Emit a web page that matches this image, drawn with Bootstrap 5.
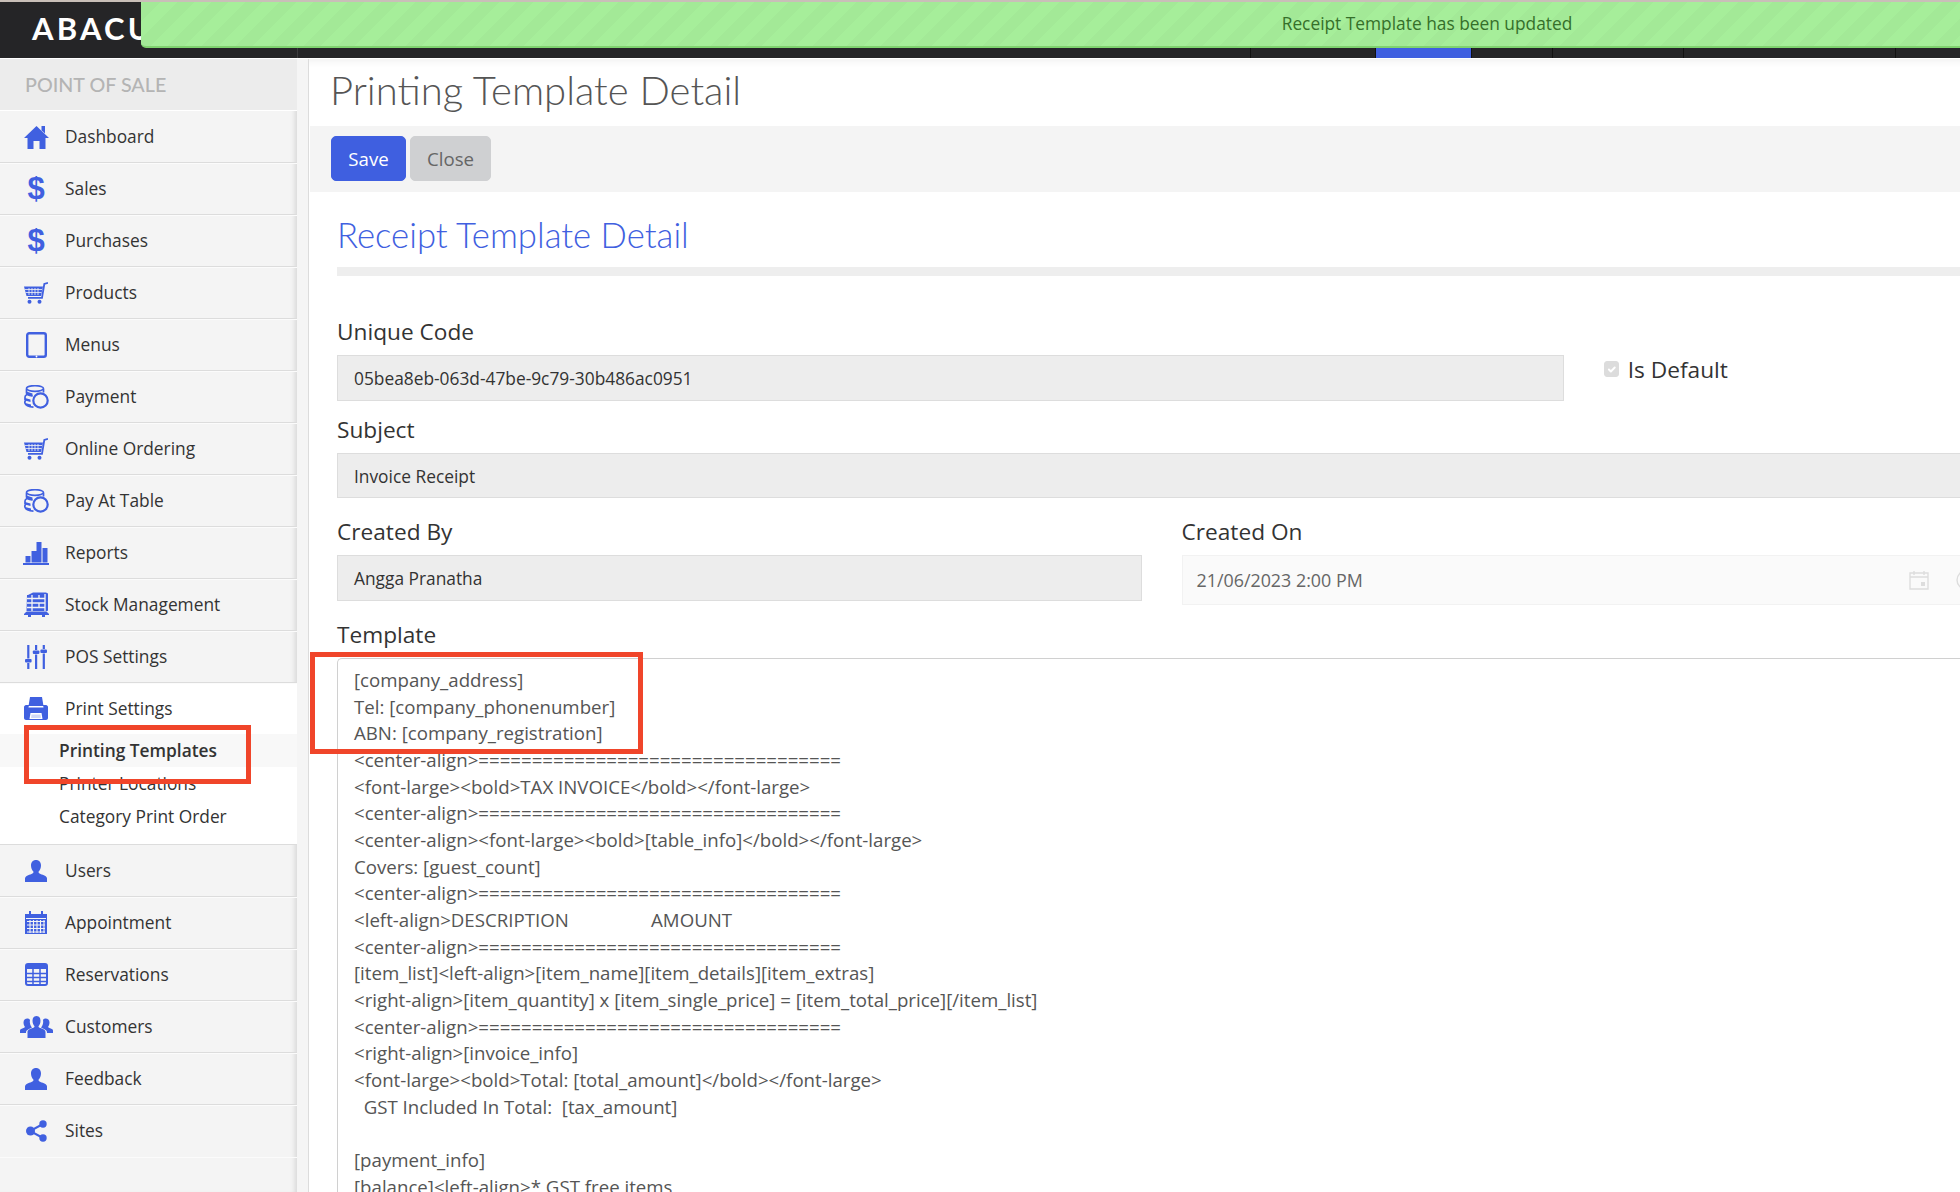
<!DOCTYPE html>
<html lang="en">
<head>
<meta charset="utf-8">
<title>Printing Template Detail</title>
<link rel="stylesheet" href="https://cdn.jsdelivr.net/npm/bootstrap@5.3.0/dist/css/bootstrap.min.css">
<style>
html,body{height:100%;overflow:hidden}
body{font-family:"Open Sans","Noto Sans",sans-serif;color:#333;background:#fff;position:relative}
a{text-decoration:none}
.top-bar{height:59px;background:#252527;border-top:2px solid #c9bfb8;border-bottom:1px solid #fff}
.logo-text{width:298px;padding-left:32px;font-family:Lato,sans-serif;font-size:31px;font-weight:700;letter-spacing:3.2px;color:#fff;line-height:52px;border-right:1px solid #3c3c3e;white-space:nowrap;overflow:hidden}
.tab-a{width:953px;border-right:1px solid #111}
.tab-b{width:125px;border-right:1px solid #111}
.tab-c{width:95px;background:#3f5fe0}
.tab-d{width:82px;border-left:1px solid #111;border-right:1px solid #111}
.tab-e{width:131px;border-right:1px solid #111}
.tab-f{width:212px;border-right:1px solid #111}
.notice{position:absolute;left:141px;top:2px;width:2572px;height:46px;border-bottom:2px solid #7fd26f;border-bottom-left-radius:5px;background-color:#a6ee9a;background-image:repeating-linear-gradient(-45deg,#a6ee9a 0,#a6ee9a 12px,#a3e997 12px,#a3e997 24px);color:#35702a;font-size:17.33px;text-align:center;line-height:43px}
.page-wrap{height:1133px;overflow:hidden}
.side{width:297px;flex:none;background:#f4f4f4;box-shadow:inset -5px 0 5px -3px rgba(0,0,0,.12)}
.side-head{height:52px;background:#ececec;padding-left:25px;line-height:52px;font-family:Lato,sans-serif;font-size:19.7px;font-weight:500;color:#b4b4b4;border-bottom:1px solid #fff}
.menu-row{height:52px;display:flex;align-items:center;padding:0 0 0 16px;background:transparent;border:0;border-bottom:1px solid #dcdcdc;box-shadow:0 1px 0 #fbfbfb;font-size:17.33px;color:#333;border-radius:0}
.menu-icon{width:40px;height:28px;margin-right:9px;display:flex;align-items:center;justify-content:center;color:#4060e0;flex:none}
.dollar{font-family:"Liberation Sans",sans-serif;font-weight:700;font-size:31px;line-height:28px}
.menu-open{background:#fff;height:162px;border-bottom:1px solid #dcdcdc}
.menu-open .menu-row{border:0;box-shadow:none;height:51px}
.sub-row{display:block;height:33px;line-height:33px;padding-left:59px;font-size:17.33px;color:#333}
.sub-on{background:#f8f8f8;font-weight:600}
.rail{width:12px;flex:none;background:#f5f5f5;border-right:1px solid #dcdcdc}
.main{width:1700px;flex:none;background:#fff}
.title-band{height:67px;padding-left:21px;font-family:Lato,sans-serif;font-size:40px;color:#555;line-height:62px;font-weight:300;box-shadow:inset 0 10px 10px -10px rgba(0,0,0,.1)}
.tool-band{height:66px;background:#f4f4f4;padding:10px 21px;margin-left:1px;gap:4px}
.act-btn{height:45px;font-size:18.67px;border-radius:5px;padding:0;line-height:42px}
.act-save{background:#3f5fe0;border-color:#3f5fe0;color:#fff;width:75px}
.act-close{background:#cfd0d2;border-color:#cfd0d2;color:#666;width:81px}
.sheet{padding:0 0 0 8px}
.sheet-head{height:75px;margin:0 0 0 20px;padding-top:23px;font-family:Lato,sans-serif;font-size:34.7px;line-height:40px;color:#4060e0;font-weight:300}
.sheet-rule{height:9px;background:#eee;margin-left:20px;margin-bottom:42px}
.wide-row{--bs-gutter-x:40px;width:1689px;margin:0}
.fld-label{display:block;height:27px;line-height:27px;font-size:22.67px;color:#333;margin-bottom:10px}
.fld-box{height:46px;line-height:44px;padding:0 16px;font-size:17.33px;color:#333;background:#ededed;border:1px solid #ddd;border-radius:0;margin-bottom:15px}
.fld-sub{height:45px;line-height:44px;margin-bottom:20px;margin-top:1px}
.fld-mid{margin-bottom:20px}
.fld-date{height:50px;line-height:48px;background:#fafafa;border-color:#f2f2f2;color:#666;padding-left:14px;font-size:17.87px;position:relative;margin-bottom:0}
.date-ico{position:absolute;left:726px;top:14px;color:#ddd}
.clock-ico{position:absolute;left:773px;top:14px;color:#ddd}
.check-wrap{margin:0;padding:6px 0 0 0;display:flex;align-items:flex-start;height:46px;margin-top:37px}
.check-box.form-check-input{float:none;margin:0 9px 0 0;width:15px;height:16px;background-color:#dcdcdc;border-color:#dcdcdc;opacity:1;border-radius:3px;flex:none}
.check-text{font-size:22.67px;line-height:18px;color:#333;opacity:1}
.tpl-label{margin-bottom:10px}
.tpl-box{height:600px;border:1px solid #d0d0d0;border-right:0;border-radius:5px 0 0 0;padding:8px 16px;font-size:18.67px;line-height:26.67px;color:#555;white-space:pre;overflow:hidden;width:1650px}
.mark-box{position:absolute;border:5px solid #f0452a;pointer-events:none}
.mark-side{left:24px;top:725px;width:227px;height:59px}
.mark-tpl{left:310px;top:652px;width:333px;height:102px}
</style>
</head>
<body>
<svg class="d-none" xmlns="http://www.w3.org/2000/svg">
  <symbol id="i-home" viewBox="0 0 25 24"><path fill="currentColor" d="M12.5 1 25 13h-3.5v11h-6v-8h-6v8h-6V13H0zM17.5 1h3.5v7.500l-3.500-3.300z"/></symbol>
  <symbol id="i-cart" viewBox="0 0 24 22"><path fill="currentColor" d="M0 4.500h19L17 14H2.500z"/><path fill="none" stroke="#f4f4f4" stroke-width=".8" d="M5 6v7M8 6v7M11 6v7M14 6v7M1 7.500h17M1.500 10.500h16"/><path fill="none" stroke="currentColor" stroke-width="1.800" d="M24 .9 20.300 2 18 15.800H4"/><circle cx="5.500" cy="19.800" r="2" fill="currentColor"/><circle cx="15.500" cy="19.800" r="2" fill="currentColor"/></symbol>
  <symbol id="i-tablet" viewBox="0 0 21 26"><rect x="1.200" y="1.200" width="18.600" height="23.600" rx="2" fill="none" stroke="currentColor" stroke-width="2.400"/><circle cx="10.500" cy="24.500" r=".9" fill="#fff"/></symbol>
  <symbol id="i-coins" viewBox="0 0 25 24"><g fill="none" stroke="currentColor" stroke-width="1.700"><ellipse cx="11" cy="3.500" rx="8.500" ry="2.800"/><path d="M2.500 4v4c0 1.500 2.500 2.600 6 2.800M19.500 4v3.500M3 9.500c-1.500.8-2 1.500-2 2.500v3M2 15c-1 .8-1.200 1.500-1.200 2.500 0 2.500 4 4.500 8.700 4.700"/></g><circle cx="16.500" cy="15.500" r="7.200" fill="none" stroke="currentColor" stroke-width="2.200"/><path fill="currentColor" d="M2.500 6.500l6 2v3l-6-2zM1 13l5.500 1.500V17L1 15.500zM1 18l6 1.500V22L1 20z"/></symbol>
  <symbol id="i-bars" viewBox="0 0 26 24"><path fill="currentColor" d="M2.500 15h5v6.500h-5zM8.500 10h5v11.500h-5zM13.500 1h5v20.500h-5zM19.500 7h5v14.500h-5z"/><rect y="22" width="26" height="2" fill="currentColor"/></symbol>
  <symbol id="i-stock" viewBox="0 0 25 25"><path fill="currentColor" d="M4 3 9 .5h13l2 1v17l-1.500 1H2.500L3 3z"/><path fill="none" stroke="#f4f4f4" stroke-width="1.300" d="M3 6.500h18M3 11h18M3 15.500h18M8 3v16M15 3v4M15 11v5M21 2v17"/><path fill="currentColor" d="M0 22 2 20h21l2 2v1H21v2h-3v-2H7v2H4v-2H0z"/></symbol>
  <symbol id="i-sliders" viewBox="0 0 22 24"><path fill="currentColor" d="M2.200 0h2.200v13.500H2.200zM2.200 18h2.200v6H2.200zM10 0h2.200v5H10zM10 9.500h2.200V24H10zM17.700 0h2.200v4H17.700zM17.700 8.500h2.200V24H17.700z"/><rect x="0" y="14" width="6.600" height="3.500" rx="1" fill="currentColor"/><rect x="7.800" y="5.500" width="6.600" height="3.500" rx="1" fill="currentColor"/><rect x="15.400" y="4.500" width="6.600" height="3.500" rx="1" fill="currentColor"/></symbol>
  <symbol id="i-print" viewBox="0 0 24 23"><path fill="currentColor" d="M6 0h12l1.500 9h-15zM0 10c0-1 1-2 2-2h3l-.5 2.500h15L19 8h3c1 0 2 1 2 2v11c0 1-1 2-2 2H2c-1 0-2-1-2-2z"/><path fill="#fff" d="M6.500 16h11l1 6h-13z"/><path fill="currentColor" d="M7.500 17.500h9l.4 3.500H7.100z" opacity=".25"/></symbol>
  <symbol id="i-user" viewBox="0 0 22 22"><path fill="currentColor" d="M11 0c3 0 5 2.200 5 5.500 0 2.500-1 5-2.500 6.300 0 1.200.5 1.700 2 2.200 3 1 6.500 2 6.500 4.500V22H0v-3.500C0 16 3.500 15 6.500 14c1.500-.5 2-1 2-2.200C7 10.500 6 8 6 5.500 6 2.200 8 0 11 0z"/></symbol>
  <symbol id="i-cal" viewBox="0 0 22 23"><path fill="currentColor" d="M0 3h4V0h2v3h10V0h2v3h4v20H0z"/><path fill="none" stroke="#f4f4f4" stroke-width="1" d="M1 7.500h20"/><path fill="none" stroke="#f4f4f4" stroke-width="1.100" d="M2 10.500h18M2 14h18M2 17.500h18M2 21h18M5 9v13M8.500 9v13M12 9v13M15.500 9v13M19 9v13"/></symbol>
  <symbol id="i-table" viewBox="0 0 23 23"><rect x="1" y="1" width="21" height="21" rx="2" fill="none" stroke="currentColor" stroke-width="2"/><path fill="currentColor" d="M1 1h21v5H1z"/><path fill="none" stroke="currentColor" stroke-width="1.500" d="M1 10.500h21M1 14.500h21M1 18.500h21M8 6v16M15 6v16"/></symbol>
  <symbol id="i-group" viewBox="0 0 33 22"><path fill="currentColor" d="M16.500 0c2.500 0 4 2 4 4.800 0 2.200-1 4.400-2 5.400 0 1 .5 1.400 1.800 1.800 2.500.9 5.200 1.800 5.200 4V22H7.500v-6c0-2.200 2.700-3.100 5.200-4 1.300-.4 1.800-.8 1.800-1.800-1-1-2-3.200-2-5.400 0-2.800 1.500-4.800 4-4.800zM7.500 2.500c1 0 2 .5 2.500 1.500-.5 2.500 0 5.500 2 7.500l-3.500 1.700C6 14.500 6 15.500 6 17H0v-2.500c0-1.500 2-2 3.500-2.500 1-.4 1.300-.7 1.300-1.500C4 9.500 3.500 8 3.500 6.500c0-2.400 1.700-4 4-4zM25.500 2.500c2.300 0 4 1.600 4 4 0 1.500-.5 3-1.300 4 0 .8.300 1.100 1.300 1.500 1.500.5 3.500 1 3.500 2.500V17h-6c0-1.500 0-2.500-2.500-3.800L21 11.500c2-2 2.500-5 2-7.500.5-1 1.500-1.500 2.500-1.500z"/></symbol>
  <symbol id="i-share" viewBox="0 0 21 22"><path fill="none" stroke="currentColor" stroke-width="2" d="M17 4 4 11l13 7"/><circle cx="4.500" cy="11" r="4.500" fill="currentColor"/><circle cx="17" cy="4" r="3.700" fill="currentColor"/><circle cx="17" cy="18" r="3.700" fill="currentColor"/></symbol>
  <symbol id="i-datecal" viewBox="0 0 20 20"><path fill="none" stroke="currentColor" stroke-width="1.400" d="M1 3h18v16H1zM1 7h18M5 1v4M15 1v4"/><rect x="12" y="12" width="4" height="4" fill="currentColor"/></symbol>
  <symbol id="i-clock" viewBox="0 0 20 20"><circle cx="10" cy="10" r="9" fill="none" stroke="currentColor" stroke-width="1.400"/><path fill="none" stroke="currentColor" stroke-width="1.400" d="M10 5v5l3 3"/></symbol>
</svg>

<header class="top-bar d-flex">
  <div class="logo-text">ABACUS</div>
  <div class="tab-a"></div>
  <div class="tab-b"></div>
  <div class="tab-c"></div>
  <div class="tab-d"></div>
  <div class="tab-e"></div>
  <div class="tab-f"></div>
</header>

<div class="page-wrap d-flex">
  <aside class="side">
    <div class="side-head">POINT OF SALE</div>
    <div class="list-group list-group-flush">
      <a class="list-group-item menu-row"><span class="menu-icon"><svg width="25" height="24"><use href="#i-home"/></svg></span>Dashboard</a>
      <a class="list-group-item menu-row"><span class="menu-icon dollar">$</span>Sales</a>
      <a class="list-group-item menu-row"><span class="menu-icon dollar">$</span>Purchases</a>
      <a class="list-group-item menu-row"><span class="menu-icon"><svg width="24" height="22"><use href="#i-cart"/></svg></span>Products</a>
      <a class="list-group-item menu-row"><span class="menu-icon"><svg width="21" height="26"><use href="#i-tablet"/></svg></span>Menus</a>
      <a class="list-group-item menu-row"><span class="menu-icon"><svg width="25" height="24"><use href="#i-coins"/></svg></span>Payment</a>
      <a class="list-group-item menu-row"><span class="menu-icon"><svg width="24" height="22"><use href="#i-cart"/></svg></span>Online Ordering</a>
      <a class="list-group-item menu-row"><span class="menu-icon"><svg width="25" height="24"><use href="#i-coins"/></svg></span>Pay At Table</a>
      <a class="list-group-item menu-row"><span class="menu-icon"><svg width="26" height="24"><use href="#i-bars"/></svg></span>Reports</a>
      <a class="list-group-item menu-row"><span class="menu-icon"><svg width="25" height="25"><use href="#i-stock"/></svg></span>Stock Management</a>
      <a class="list-group-item menu-row"><span class="menu-icon"><svg width="22" height="24"><use href="#i-sliders"/></svg></span>POS Settings</a>
      <div class="menu-open">
        <a class="list-group-item menu-row"><span class="menu-icon"><svg width="24" height="23"><use href="#i-print"/></svg></span>Print Settings</a>
        <a class="sub-row sub-on">Printing Templates</a>
        <a class="sub-row">Printer Locations</a>
        <a class="sub-row">Category Print Order</a>
      </div>
      <a class="list-group-item menu-row"><span class="menu-icon"><svg width="22" height="22"><use href="#i-user"/></svg></span>Users</a>
      <a class="list-group-item menu-row"><span class="menu-icon"><svg width="22" height="23"><use href="#i-cal"/></svg></span>Appointment</a>
      <a class="list-group-item menu-row"><span class="menu-icon"><svg width="23" height="23"><use href="#i-table"/></svg></span>Reservations</a>
      <a class="list-group-item menu-row"><span class="menu-icon"><svg width="33" height="22"><use href="#i-group"/></svg></span>Customers</a>
      <a class="list-group-item menu-row"><span class="menu-icon"><svg width="22" height="22"><use href="#i-user"/></svg></span>Feedback</a>
      <a class="list-group-item menu-row"><span class="menu-icon"><svg width="21" height="22"><use href="#i-share"/></svg></span>Sites</a>
    </div>
  </aside>
  <div class="rail"></div>
  <main class="main">
    <h1 class="title-band m-0">Printing Template Detail</h1>
    <div class="tool-band d-flex">
      <button type="button" class="btn act-btn act-save">Save</button>
      <button type="button" class="btn act-btn act-close">Close</button>
    </div>
    <div class="sheet">
      <h2 class="sheet-head">Receipt Template Detail</h2>
      <div class="sheet-rule"></div>
      <div class="row wide-row">
        <div class="col-9">
          <label class="fld-label">Unique Code</label>
          <div class="form-control fld-box">05bea8eb-063d-47be-9c79-30b486ac0951</div>
        </div>
        <div class="col-3">
          <div class="form-check check-wrap">
            <input class="form-check-input check-box" type="checkbox" checked disabled>
            <label class="check-text">Is Default</label>
          </div>
        </div>
        <div class="col-12">
          <label class="fld-label">Subject</label>
          <div class="form-control fld-box fld-sub">Invoice Receipt</div>
        </div>
        <div class="col-6">
          <label class="fld-label">Created By</label>
          <div class="form-control fld-box fld-mid">Angga Pranatha</div>
        </div>
        <div class="col-6">
          <label class="fld-label">Created On</label>
          <div class="form-control fld-box fld-date">21/06/2023 2:00 PM<svg class="date-ico" width="20" height="20"><use href="#i-datecal"/></svg><svg class="clock-ico" width="20" height="20"><use href="#i-clock"/></svg></div>
        </div>
        <div class="col-12">
          <label class="fld-label tpl-label">Template</label>
          <div class="form-control tpl-box">[company_address]
Tel: [company_phonenumber]
ABN: [company_registration]
&lt;center-align&gt;==================================
&lt;font-large&gt;&lt;bold&gt;TAX INVOICE&lt;/bold&gt;&lt;/font-large&gt;
&lt;center-align&gt;==================================
&lt;center-align&gt;&lt;font-large&gt;&lt;bold&gt;[table_info]&lt;/bold&gt;&lt;/font-large&gt;
Covers: [guest_count]
&lt;center-align&gt;==================================
&lt;left-align&gt;DESCRIPTION                 AMOUNT
&lt;center-align&gt;==================================
[item_list]&lt;left-align&gt;[item_name][item_details][item_extras]
&lt;right-align&gt;[item_quantity] x [item_single_price] = [item_total_price][/item_list]
&lt;center-align&gt;==================================
&lt;right-align&gt;[invoice_info]
&lt;font-large&gt;&lt;bold&gt;Total: [total_amount]&lt;/bold&gt;&lt;/font-large&gt;
  GST Included In Total:  [tax_amount]

[payment_info]
[balance]&lt;left-align&gt;* GST free items</div>
        </div>
      </div>
    </div>
  </main>
</div>

<div class="notice" role="alert">Receipt Template has been updated</div>
<div class="mark-box mark-side"></div>
<div class="mark-box mark-tpl"></div>
<script src="https://cdn.jsdelivr.net/npm/bootstrap@5.3.0/dist/js/bootstrap.bundle.min.js"></script>
</body>
</html>
